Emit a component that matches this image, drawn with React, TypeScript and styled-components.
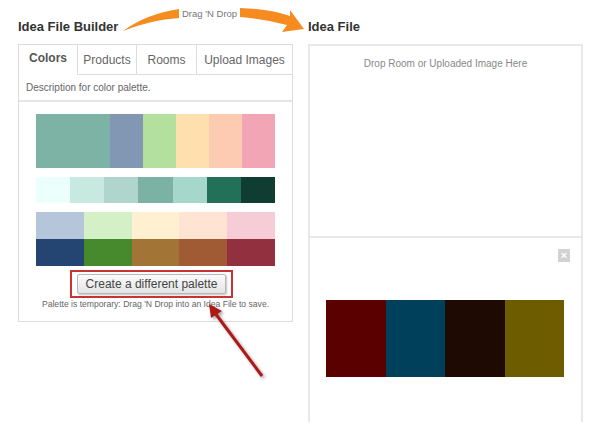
import React from 'react';
import styled, {createGlobalStyle} from 'styled-components';

const GlobalStyle = createGlobalStyle`
  body {
    margin: 0;
    background: #fff;
    font-family: "Liberation Sans", Arial, sans-serif;
  }
`;

// Page frame
const Page = styled.div`
  position: relative;
  width: 593px;
  height: 435px;
  box-sizing: border-box;
  padding: 19px 0 0 18px;
  display: flex;
  gap: 15px;
  overflow: hidden;
`;

const Column = styled.div`
  width: 275px;
  display: flex;
  flex-direction: column;
`;

const Heading = styled.h2`
  margin: 0 0 9px;
  font-size: 13px;
  line-height: 16px;
  font-weight: 700;
  color: #333;
`;

// Left builder panel
const BuilderPanel = styled.div`
  height: 278px;
  box-sizing: border-box;
  border: 1px solid #dcdcdc;
  display: flex;
  flex-direction: column;
`;

const TabRow = styled.div`
  display: flex;
  height: 30px;
`;

const Tab = styled.div<{$active?: boolean; $w: number; $last?: boolean}>`
  width: ${(p) => p.$w}px;
  flex: ${(p) => (p.$last ? 1 : 'none')};
  box-sizing: border-box;
  display: flex;
  align-items: center;
  justify-content: center;
  font-size: 12px;
  color: ${(p) => (p.$active ? '#555' : '#666')};
  font-weight: ${(p) => (p.$active ? 700 : 400)};
  padding-bottom: ${(p) => (p.$active ? 4 : 0)}px;
  border-right: ${(p) => (p.$last ? 'none' : '1px solid #dcdcdc')};
  border-bottom: ${(p) => (p.$active ? 'none' : '1px solid #dcdcdc')};
  background: #fff;
`;

const Description = styled.div`
  height: 25px;
  padding-left: 7px;
  display: flex;
  align-items: center;
  font-size: 10px;
  color: #666;
  border-bottom: 2px solid #e6e6e6;
`;

const PaletteArea = styled.div`
  padding: 12px 17px 0;
  display: flex;
  flex-direction: column;
`;

const Strip = styled.div<{$h: number; $mb?: number}>`
  display: flex;
  height: ${(p) => p.$h}px;
  margin-bottom: ${(p) => p.$mb ?? 0}px;
`;

const Swatch = styled.div<{$c: string; $grow?: number}>`
  flex: ${(p) => p.$grow ?? 1} 1 0;
  background: ${(p) => p.$c};
`;

const Highlight = styled.div`
  width: 163px;
  height: 28px;
  box-sizing: border-box;
  margin: 4px 0 0 51px;
  border: 2px solid #c83434;
  display: flex;
  align-items: center;
  justify-content: center;
`;

const PaletteButton = styled.button`
  width: 149px;
  height: 20px;
  padding: 0;
  border: 1px solid #b8b8b8;
  border-radius: 2px;
  background: linear-gradient(#fbfbfb, #e4e4e4);
  box-shadow: 1px 1px 2px rgba(0, 0, 0, 0.25);
  font-family: "Liberation Sans", Arial, sans-serif;
  font-size: 12px;
  color: #444;
`;

const FootNote = styled.div`
  margin-top: 1px;
  font-size: 8.6px;
  line-height: 10px;
  color: #666;
  text-align: center;
`;

// Right idea file panel
const IdeaPanel = styled.div`
  height: 378px;
  box-sizing: border-box;
  border: 2px solid #e8e8e8;
  border-bottom: none;
  display: flex;
  flex-direction: column;
`;

const DropZone = styled.div`
  height: 192px;
  padding-top: 13px;
  box-sizing: border-box;
  text-align: center;
  font-size: 10px;
  line-height: 10px;
  color: #888;
  border-bottom: 2px solid #e8e8e8;
`;

const SavedItem = styled.div`
  flex: 1;
  padding: 11px 11px 0 16px;
  display: flex;
  flex-direction: column;
`;

const CloseRow = styled.div`
  display: flex;
  justify-content: flex-end;
`;

const CloseBox = styled.div`
  width: 12px;
  height: 13px;
  background: #d2d2d2;
  color: #fff;
  font-size: 11px;
  font-weight: 700;
  line-height: 13px;
  text-align: center;
`;

const SavedPalette = styled.div`
  margin-top: 38px;
  width: 238px;
  height: 77px;
  display: flex;
`;

// Annotations drawn over the page
const Overlay = styled.svg`
  position: absolute;
  left: 0;
  top: 0;
  pointer-events: none;
`;

const DragLabel = styled.span`
  position: absolute;
  left: 182px;
  top: 8px;
  font-size: 9.5px;
  line-height: 11px;
  color: #777;
`;

const RedArrow = styled.svg`
  position: absolute;
  left: 190px;
  top: 290px;
  filter: drop-shadow(2px 2px 1.5px rgba(0, 0, 0, 0.35));
`;

const topStrip = [
  {c: '#7db3a4', g: 74},
  {c: '#8197b4', g: 33},
  {c: '#b3e09d', g: 33},
  {c: '#fde0ae', g: 33},
  {c: '#fdcab2', g: 33},
  {c: '#f1a5b5', g: 33},
];
const midStrip = ['#ebfffb', '#c8e9e0', '#b0d5cd', '#7bb2a3', '#a5d8ca', '#237059', '#0f3d31'];
const lightRow = ['#b5c5da', '#d4f0c7', '#fff0d2', '#ffe3d3', '#f6cdd6'];
const darkRow = ['#244471', '#468a2d', '#a27536', '#a05b34', '#93303f'];
const saved = ['#5a0000', '#01405a', '#1e0a03', '#6e5d00'];

export default function App() {
  return (
    <>
      <GlobalStyle />
      <Page>
        <Column>
          <Heading>Idea File Builder</Heading>
          <BuilderPanel>
            <TabRow>
              <Tab $active $w={59}>Colors</Tab>
              <Tab $w={59}>Products</Tab>
              <Tab $w={60}>Rooms</Tab>
              <Tab $w={95} $last>Upload Images</Tab>
            </TabRow>
            <Description>Description for color palette.</Description>
            <PaletteArea>
              <Strip $h={54} $mb={9}>
                {topStrip.map((s) => (
                  <Swatch key={s.c} $c={s.c} $grow={s.g} />
                ))}
              </Strip>
              <Strip $h={26} $mb={9}>
                {midStrip.map((c) => (
                  <Swatch key={c} $c={c} />
                ))}
              </Strip>
              <Strip $h={27}>
                {lightRow.map((c) => (
                  <Swatch key={c} $c={c} />
                ))}
              </Strip>
              <Strip $h={27}>
                {darkRow.map((c) => (
                  <Swatch key={c} $c={c} />
                ))}
              </Strip>
            </PaletteArea>
            <Highlight>
              <PaletteButton>Create a different palette</PaletteButton>
            </Highlight>
            <FootNote>Palette is temporary: Drag 'N Drop into an Idea File to save.</FootNote>
          </BuilderPanel>
        </Column>

        <Column>
          <Heading>Idea File</Heading>
          <IdeaPanel>
            <DropZone>Drop Room or Uploaded Image Here</DropZone>
            <SavedItem>
              <CloseRow>
                <CloseBox>×</CloseBox>
              </CloseRow>
              <SavedPalette>
                {saved.map((c) => (
                  <Swatch key={c} $c={c} />
                ))}
              </SavedPalette>
            </SavedItem>
          </IdeaPanel>
        </Column>

        <Overlay width="593" height="45" viewBox="0 0 593 45">
          <path d="M123 31 Q146 14 179 9 L179 18 Q150 20 123 31 Z" fill="#f68b1f" />
          <path
            d="M240 8 Q270 9 290 16 L290 10 L304 29 L282 32 L287 25 Q266 19 240 17 Z"
            fill="#f68b1f"
          />
        </Overlay>
        <DragLabel>Drag 'N Drop</DragLabel>

        <RedArrow width="90" height="100" viewBox="190 290 90 100">
          <line x1="262" y1="376" x2="215" y2="313" stroke="#b01818" strokeWidth="3" />
          <polygon points="209,304 222,311 211,318" fill="#b01818" />
        </RedArrow>
      </Page>
    </>
  );
}
